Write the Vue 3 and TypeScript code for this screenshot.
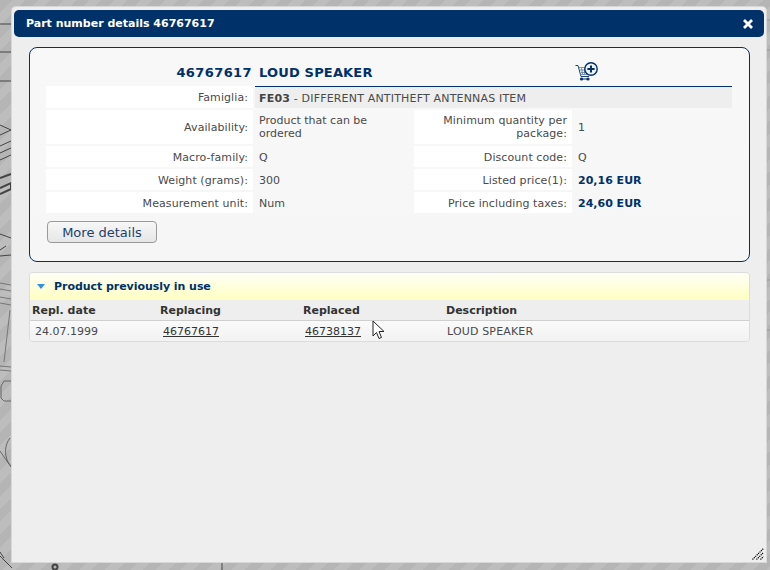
<script setup lang="ts">
interface Field {
  label: string
  value: string
  strong?: boolean
}
const rows: Field[][] = [
  [
    { label: 'Availability:', value: 'Product that can be ordered' },
    { label: 'Minimum quantity per package:', value: '1' },
  ],
  [
    { label: 'Macro-family:', value: 'Q' },
    { label: 'Discount code:', value: 'Q' },
  ],
  [
    { label: 'Weight (grams):', value: '300' },
    { label: 'Listed price(1):', value: '20,16 EUR', strong: true },
  ],
  [
    { label: 'Measurement unit:', value: 'Num' },
    { label: 'Price including taxes:', value: '24,60 EUR', strong: true },
  ],
]
</script>

<template>
  <div class="page">
    <svg class="sketch" width="770" height="570" viewBox="0 0 770 570" fill="none" stroke="#444" stroke-width="1">
      <path d="M0 24h13M0 52h13M0 81h13" />
      <path d="M0 125l11 5-11 5M0 146l11-5M0 153l11-5M0 160l11-5" />
      <path d="M0 178l11-4M0 188l11-5v6l-11 5" stroke-width="2" />
      <path d="M0 234l11 4M0 250l6-4M0 256l11-1" />
      <path d="M0 283l11 2M0 289l11 2M0 297l11 2M0 303l11 2" stroke="#777" />
      <path d="M10 310l-6 52M0 366l11 1M0 370l11 1" stroke="#777" />
      <path d="M11 381H4l-3 5v12l3 3h7" stroke="#666" />
      <path d="M10 438c-5 6-6 16-2 24l3 4M0 451l11 16" stroke="#666" />
      <path d="M0 556l12 12M0 552l4 6" />
      <circle cx="55" cy="567" r="2.5" stroke-width="2" />
      <path d="M222 562v8" />
      <path d="M766 20h4M766 50h4M766 280h4M766 330h4" stroke="#999" />
    </svg>

    <section class="dialog">
      <header class="titlebar">
        <span>Part number details 46767617</span>
        <svg class="close" width="10" height="10" viewBox="0 0 10 10" stroke="#fff" stroke-width="2.8">
          <path d="M1 1l8 8M9 1l-8 8" />
        </svg>
      </header>

      <div class="body">
        <div class="panel">
          <div class="heading">
            <span class="code">46767617</span>
            <span class="name">LOUD SPEAKER</span>
            <svg class="cart" width="24" height="20" viewBox="0 0 24 20" fill="none">
              <path d="M0.5 3.5h2.5l3 11h8" stroke="#1c3f6e" stroke-width="1" />
              <path d="M3.5 5.5h10l-1 7h-7.5M5 8h8M6 10.5h7M6.5 5.5l1 7M9.5 5.5v7M12 5.5l-.5 7" stroke="#5f7c9f" stroke-width="0.8" />
              <circle cx="6.5" cy="17" r="1.6" fill="#003169" />
              <circle cx="13" cy="17" r="1.6" fill="#003169" />
              <path d="M6.5 17h6.5" stroke="#003169" stroke-width="1" />
              <circle cx="16" cy="7" r="6.2" fill="#eef3f8" stroke="#003169" stroke-width="1.4" />
              <path d="M12.4 7h7.2M16 3.4v7.2" stroke="#003169" stroke-width="2" />
            </svg>
          </div>

          <div class="info">
            <div class="label">Famiglia:</div>
            <div class="family"><b>FE03</b> - DIFFERENT ANTITHEFT ANTENNAS ITEM</div>
            <template v-for="(row, r) in rows" :key="row[0].label">
              <template v-for="field in row" :key="field.label">
                <div class="label" :class="{ low: r > 0 }">{{ field.label }}</div>
                <div class="value" :class="{ strong: field.strong, low: r > 0 }">{{ field.value }}</div>
              </template>
            </template>
          </div>

          <button class="more" type="button">More details</button>
        </div>

        <div class="history">
          <div class="history-title">
            <svg width="8" height="5" viewBox="0 0 8 5"><path d="M0 0h8L4 5z" fill="#2e8fe8" /></svg>
            <span>Product previously in use</span>
          </div>
          <div class="tr th">
            <span>Repl. date</span><span>Replacing</span><span>Replaced</span><span>Description</span>
          </div>
          <div class="tr td">
            <span>24.07.1999</span><a>46767617</a><a>46738137</a><span class="desc">LOUD SPEAKER</span>
          </div>
        </div>
      </div>

      <svg class="grip" width="12" height="12" viewBox="0 0 12 12" stroke="#000" stroke-width="1.2" stroke-dasharray="1.2 0.8">
        <path d="M0.5 11.5l11-11M4.5 11.5l7-7M8.5 11.5l3-3" />
      </svg>
    </section>

    <svg class="pointer" width="14" height="20" viewBox="0 0 14 20">
      <path d="M1 1v15l3.5-3.5 2.5 6 2.5-1-2.5-6H12z" fill="#fff" stroke="#222" stroke-width="1" stroke-linejoin="round" />
    </svg>
  </div>
</template>

<style>
html,
body {
  margin: 0;
}
</style>

<style scoped>
.page {
  position: relative;
  box-sizing: border-box;
  width: 770px;
  height: 570px;
  overflow: hidden;
  padding: 7px 4px 8px 12px;
  display: flex;
  font-family: "DejaVu Sans", Verdana, sans-serif;
  font-size: 11px;
  color: #4a4a4a;
  background: repeating-linear-gradient(135deg, #b5b5b5 0 9px, #bdbdbd 9px 18px);
}
.sketch {
  position: absolute;
  inset: 0;
}
.dialog {
  position: relative;
  flex: 1;
  display: flex;
  flex-direction: column;
  box-sizing: border-box;
  padding: 3px 2px 0;
  background: #eeeeee;
  border-radius: 4px 4px 0 0;
  box-shadow: 0 0 0 1px #d8d8d8;
}
.titlebar {
  height: 27px;
  flex: none;
  box-sizing: border-box;
  padding: 0 12px;
  display: flex;
  align-items: center;
  justify-content: space-between;
  background: #003169;
  border-radius: 5px;
  color: #fff;
  font-weight: 700;
  font-size: 11px;
}
.close {
  margin-right: -1px;
}
.body {
  padding: 10px 14px 0 15px;
  display: flex;
  flex-direction: column;
  gap: 11px;
}
.panel {
  height: 215px;
  box-sizing: border-box;
  padding: 12px 16px 0;
  border: 1px solid #003169;
  border-radius: 8px;
  background: linear-gradient(#f8f8f8, #f6f6f6);
}
.heading {
  height: 27px;
  box-sizing: border-box;
  padding-bottom: 2px;
  display: grid;
  grid-template-columns: 207px 322px 1fr;
  align-items: center;
  color: #003169;
  font-weight: 700;
  font-size: 13px;
}
.code {
  text-align: right;
  padding-right: 1px;
  letter-spacing: 0.4px;
}
.name {
  padding-left: 6px;
  letter-spacing: 0.17px;
}
.cart {
  margin-top: -2px;
}
.info {
  display: grid;
  grid-template-columns: 207px 161px 158px 160px;
  grid-auto-rows: 21px;
  grid-template-rows: 22px 34px;
  row-gap: 2px;
  margin-top: -1px;
}
.label {
  display: flex;
  align-items: center;
  justify-content: flex-end;
  text-align: right;
  padding: 0 5px 0 0;
  background: #fff;
  line-height: 13px;
  letter-spacing: 0.08px;
}
.value {
  display: flex;
  align-items: center;
  padding: 0 6px;
  line-height: 13px;
}
.low {
  padding-top: 2px;
  box-sizing: border-box;
}
.strong {
  color: #003169;
  font-weight: 700;
}
.family {
  grid-column: 2 / 5;
  display: flex;
  align-items: center;
  white-space: pre;
  margin-left: 2px;
  padding: 1px 0 0 4px;
  background: #eeeeee;
  border-top: 1px solid #003169;
  letter-spacing: 0.18px;
}
.family b {
  color: #444;
}
.more {
  display: block;
  margin: 8px 0 0 1px;
  width: 110px;
  height: 22px;
  padding: 0;
  font: 13px "DejaVu Sans", Verdana, sans-serif;
  color: #1d3f6e;
  background: linear-gradient(#f7f7f7, #e6e6e6);
  border: 1px solid #9a9a9a;
  border-radius: 4px;
}
.history {
  width: 721px;
  box-sizing: border-box;
  border: 1px solid #dcdcdc;
  border-radius: 4px;
  overflow: hidden;
  margin-top: -1px;
}
.history-title {
  height: 26px;
  display: flex;
  align-items: center;
  gap: 9px;
  padding: 0 0 1px 7px;
  box-sizing: content-box;
  color: #003169;
  font-weight: 700;
  letter-spacing: -0.05px;
  background: linear-gradient(#fffff8, #ffffc0);
}
.tr {
  display: grid;
  grid-template-columns: 128px 143px 143px 1fr;
  align-items: center;
}
.th {
  height: 20px;
  padding-left: 2px;
  background: #eeeeee;
  border-bottom: 1px solid #cfcfcf;
  color: #333;
  font-weight: 700;
}
.td {
  height: 20px;
  padding-left: 5px;
  background: linear-gradient(#fafafa, #f2f2f2);
  grid-template-columns: 128px 142px 142px 1fr;
}
.td a {
  color: #333;
  text-decoration: underline;
}
.desc {
  letter-spacing: 0.16px;
}
.grip {
  position: absolute;
  right: 2px;
  bottom: 2px;
}
.pointer {
  position: absolute;
  left: 372px;
  top: 320px;
}
</style>
